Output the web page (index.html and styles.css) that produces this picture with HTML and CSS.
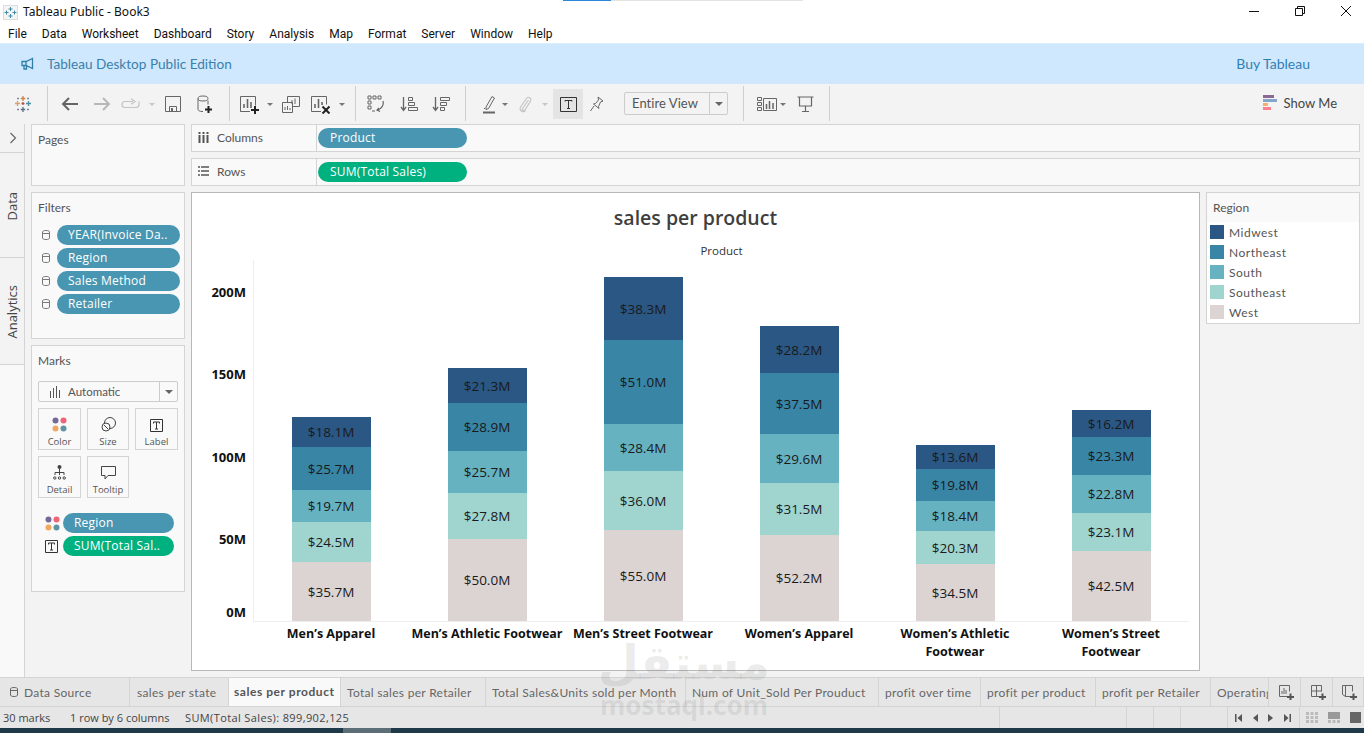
FILE: index.html
```html
<!DOCTYPE html>
<html lang="en">
<head>
<meta charset="utf-8">
<title>Tableau Public - Book3</title>
<link rel="stylesheet" href="styles.css">
</head>
<body>
<div class="app">
  <div class="sliver"><span class="sliver-blue"></span><span class="sliver-gray"></span></div>
  <header class="titlebar">
    <svg class="app-icon" width="15" height="15" viewBox="0 0 15 15"><rect x=".5" y=".5" width="14" height="14" fill="#f4f4f4" stroke="#ddd"/><g stroke="#3f8aa6" stroke-width="1" fill="none"><path d="M7.500 2v4M5.500 4h4M7.500 9v4M5.500 11h4M3.500 5.500v4M1.500 7.500h4M11.500 5.500v4M9.500 7.500h4"/></g></svg>
    <span class="title-text">Tableau Public - Book3</span>
    <div class="win-controls">
      <svg width="12" height="12" viewBox="0 0 12 12"><path d="M1 6.500h10" stroke="#111"/></svg>
      <svg width="12" height="12" viewBox="0 0 12 12"><path d="M1.500 3.500h7v7h-7zM3.500 3.500v-2h7v7h-2" fill="none" stroke="#111"/></svg>
      <svg width="12" height="12" viewBox="0 0 12 12"><path d="M1 1l10 10M11 1L1 11" stroke="#111"/></svg>
    </div>
  </header>
  <nav class="menubar">
    <span>File</span><span>Data</span><span>Worksheet</span><span>Dashboard</span><span>Story</span><span>Analysis</span><span>Map</span><span>Format</span><span>Server</span><span>Window</span><span>Help</span>
  </nav>
  <div class="banner">
    <svg width="14" height="14" viewBox="0 0 14 14" class="horn"><path d="M1 4.500h4L11.500 1.500v10L5 8.500H1zM5 4.500v4M3 8.500v3.500h2.500V8.800" fill="none" stroke="#2f7fa8" stroke-width="1.300"/></svg>
    <span class="banner-text">Tableau Desktop Public Edition</span>
    <span class="buy">Buy Tableau</span>
  </div>
  <div class="toolbar">
    <span class="tb w32"><svg width="18" height="18" viewBox="0 0 18 18" fill="none" stroke-width="1.300"><path d="M9 1v5M6.800 3.500h4.400" stroke="#c9834a"/><path d="M9 12v5M6.800 14.500h4.400" stroke="#5b6f8c"/><path d="M3.500 6v5M1 8.500h5" stroke="#d9a06c"/><path d="M14.500 6v5M12 8.500h5" stroke="#4e8fa3"/><path d="M9 7v3M7.500 8.500h3" stroke="#b4564a"/><path d="M4 2.500v2M3 3.500h2M14 2.500v2M13 3.500h2M4 13.500v2M3 14.500h2M14 13.500v2M13 14.500h2" stroke="#7b8a9a" stroke-width="1"/></svg></span>
    <i class="sep sep-a"></i>
    <span class="tb w32"><svg width="18" height="14" viewBox="0 0 18 14"><path d="M17 7H2M8 1L2 7l6 6" fill="none" stroke="#666" stroke-width="2"/></svg></span>
    <span class="tb w32"><svg width="18" height="14" viewBox="0 0 18 14"><path d="M1 7h15M10 1l6 6-6 6" fill="none" stroke="#b8b8b8" stroke-width="2"/></svg></span>
    <span class="tb w26"><svg width="20" height="12" viewBox="0 0 20 12"><path d="M12 3.500H4a3 3 0 0 0 0 6h11a3 3 0 0 0 3-3V3.500M10 .8l4 2.700-4 2.700" fill="none" stroke="#c4c4c4" stroke-width="1.200"/></svg></span>
    <span class="tb w16"><i class="caret off"></i></span>
    <span class="tb w26"><svg width="16" height="16" viewBox="0 0 16 16"><path d="M.5.500h15v15H.5z" fill="none" stroke="#666"/><path d="M4.500 10.500h7v5h-7z" fill="none" stroke="#666"/><path d="M6 12h2v3.500H6z" fill="#666"/></svg></span>
    <span class="tb w38"><svg width="16" height="19" viewBox="0 0 16 19"><path d="M11 5.500v4M1 3.500v11c0 1 2 2 4 2h1" fill="none" stroke="#666"/><ellipse cx="6" cy="3.500" rx="5" ry="2.500" fill="none" stroke="#666"/><path d="M8 14.500h7M11.500 11v7" stroke="#222" stroke-width="2"/></svg></span>
    <i class="sep sep-b"></i>
    <span class="tb w32"><svg width="20" height="19" viewBox="0 0 20 19"><path d="M1 16.500H.5V1.500h15v9" fill="none" stroke="#666"/><path d="M.5 16.500H10" stroke="#666"/><path d="M4 13V9M7.500 13V4M11 13V7" stroke="#666" stroke-width="1.600"/><path d="M11 15h8M15 11v8" stroke="#222" stroke-width="2"/></svg></span>
    <span class="tb w8"><i class="caret"></i></span>
    <span class="tb w34"><svg width="18" height="17" viewBox="0 0 18 17"><path d="M5.500 8.500V.5h12v10h-7" fill="none" stroke="#666"/><path d="M.5 6.500h10v10H.5z" fill="#f3f3f3" stroke="#666"/><path d="M10 8V4M13 8V2.500M3 14v-3M5.500 14v-4M8 14v-2" stroke="#666"/></svg></span>
    <span class="tb w26"><svg width="20" height="19" viewBox="0 0 20 19"><path d="M10 16.500H.5V1.500h15v8" fill="none" stroke="#666"/><path d="M4 13V9M7.500 13V4M11 10V7" stroke="#666" stroke-width="1.600"/><path d="M11.500 11.500l7 7M18.500 11.500l-7 7" stroke="#222" stroke-width="2"/></svg></span>
    <span class="tb w16"><i class="caret"></i></span>
    <i class="sep sep-c"></i>
    <span class="tb w40"><svg width="18" height="18" viewBox="0 0 18 18"><path d="M1 1h3v3H1zM6 1h3v3H6zM11 1h3v3h-3zM1 6h3v3H1zM1 11h3v3H1z" fill="none" stroke="#666"/><path d="M16 6c1 4-1 7-5 9M12 13l-2 2 3 1.500M5 16h3" fill="none" stroke="#666" stroke-width="1.200"/></svg></span>
    <span class="tb w26"><svg width="18" height="16" viewBox="0 0 18 16"><path d="M3.500 1v13M1 11l2.500 3.500L6 11" fill="none" stroke="#666" stroke-width="1.300"/><path d="M8.500 1.500h4v3h-4zM8.500 6.500h6v3h-6zM8.500 11.500h9v3h-9z" fill="none" stroke="#666"/></svg></span>
    <span class="tb w38"><svg width="18" height="16" viewBox="0 0 18 16"><path d="M3.500 1v13M1 11l2.500 3.500L6 11" fill="none" stroke="#666" stroke-width="1.300"/><path d="M8.500 1.500h9v3h-9zM8.500 6.500h6v3h-6zM8.500 11.500h4v3h-4z" fill="none" stroke="#666"/></svg></span>
    <i class="sep sep-d"></i>
    <span class="tb w22"><svg width="13" height="19" viewBox="0 0 13 19"><path d="M3 12L9 1.500l2.500 1.500-6 10.500-2.500 1z" fill="none" stroke="#666"/><path d="M1 13l1 1" stroke="#666"/><path d="M0 17.500h12" stroke="#666" stroke-width="2"/></svg></span>
    <span class="tb w10"><i class="caret"></i></span>
    <span class="tb w30"><svg width="13" height="17" viewBox="0 0 13 17"><path d="M9.500 4l-6 8.500c-1 1.500 1 3 2.500 1.500l5.500-9c1.500-3-2.500-5-4-2.500L1.500 11c-1.500 3 2 6.500 5 3.500" fill="none" stroke="#c2c2c2" stroke-width="1.100"/></svg></span>
    <span class="tb w10"><i class="caret off"></i></span>
    <span class="tb w30 tb-on"><svg width="17" height="15" viewBox="0 0 17 15"><path d="M.5.500h16v14H.5z" fill="none" stroke="#333"/><path d="M5 4.500V3.500h7v1M8.500 3.500v8M7 11.500h3" fill="none" stroke="#333"/></svg></span>
    <span class="tb w28"><svg width="14" height="16" viewBox="0 0 14 16"><path d="M8 1l5 4-2.500 1-2 4.500L9 12.500 3.500 8l2-.5 3-3.500zM4 10l-3.500 5" fill="none" stroke="#666" stroke-linejoin="round"/></svg></span>
    <div class="fit-select"><span class="fit-label">Entire View</span><span class="fit-arrow"><i class="caret dark"></i></span></div>
    <i class="sep sep-e"></i>
    <span class="tb w22"><svg width="20" height="14" viewBox="0 0 20 14"><path d="M.5.500h4v3h-4zM.5 5.500h4v3h-4zM.5 10.500h4v3h-4zM6.500 1.500h13v12h-13z" fill="none" stroke="#666"/><path d="M9.500 12V7M12.500 12V4M16 12V6" stroke="#666" stroke-width="1.500"/></svg></span>
    <span class="tb w10"><i class="caret"></i></span>
    <span class="tb w34"><svg width="17" height="16" viewBox="0 0 17 16"><path d="M.5 1h16M2.500 1v9h12V1M8.500 10v5M5 15.500h7" fill="none" stroke="#666" stroke-width="1.200"/></svg></span>
    <i class="sep sep-f"></i>
    <div class="showme">
      <svg width="15" height="16" viewBox="0 0 15 16"><path d="M0 0h11v3H0z" fill="#8a6a94"/><path d="M0 4h14v3H0z" fill="#84a6c8"/><path d="M0 8h5v3H0z" fill="#f3b06c"/><path d="M0 12h8v3H0z" fill="#fb7f8e"/></svg>
      <span>Show Me</span>
    </div>
  </div>

  <div class="workspace">
    <aside class="rail">
      <div class="rail-top"><svg width="8" height="12" viewBox="0 0 8 12"><path d="M1.500 1l5 5-5 5" fill="none" stroke="#666" stroke-width="1.200"/></svg></div>
      <div class="rail-item rail-data"><span>Data</span></div>
      <div class="rail-item rail-analytics"><span>Analytics</span></div>
    </aside>
    <section class="side">
      <div class="card pages"><div class="card-title">Pages</div></div>
      <div class="card filters">
        <div class="card-title">Filters</div>
        <div class="filter-list">
          <div class="filter-row"><svg class="db" width="8" height="10" viewBox="0 0 8 10"><path d="M.5 2v6c0 1 1.500 1.500 3.500 1.500S7.500 9 7.500 8V2C7.500 1 6 .5 4 .5S.5 1 .5 2zM.5 3.500h7" fill="none" stroke="#777"/></svg><span class="pill blue">YEAR(Invoice Da..</span></div>
          <div class="filter-row"><svg class="db" width="8" height="10" viewBox="0 0 8 10"><path d="M.5 2v6c0 1 1.500 1.500 3.500 1.500S7.500 9 7.500 8V2C7.500 1 6 .5 4 .5S.5 1 .5 2zM.5 3.500h7" fill="none" stroke="#777"/></svg><span class="pill blue">Region</span></div>
          <div class="filter-row"><svg class="db" width="8" height="10" viewBox="0 0 8 10"><path d="M.5 2v6c0 1 1.500 1.500 3.500 1.500S7.500 9 7.500 8V2C7.500 1 6 .5 4 .5S.5 1 .5 2zM.5 3.500h7" fill="none" stroke="#777"/></svg><span class="pill blue">Sales Method</span></div>
          <div class="filter-row"><svg class="db" width="8" height="10" viewBox="0 0 8 10"><path d="M.5 2v6c0 1 1.500 1.500 3.500 1.500S7.500 9 7.500 8V2C7.500 1 6 .5 4 .5S.5 1 .5 2zM.5 3.500h7" fill="none" stroke="#777"/></svg><span class="pill blue">Retailer</span></div>
        </div>
      </div>
      <div class="card marks">
        <div class="card-title">Marks</div>
        <div class="mark-type">
          <svg width="10" height="12" viewBox="0 0 10 12"><path d="M.5 5v7M3.500 2v10M6.500 0v12M9.500 4v8" stroke="#555"/></svg>
          <span class="mark-type-label">Automatic</span>
          <span class="mark-type-arrow"><i class="caret dark"></i></span>
        </div>
        <div class="mark-grid">
          <div class="mark-btn"><svg width="15" height="15" viewBox="0 0 15 15"><circle cx="3.500" cy="3.500" r="3" fill="#75699a"/><circle cx="11.500" cy="3.500" r="3" fill="#ef6479"/><circle cx="3.500" cy="11.500" r="3" fill="#f0a860"/><circle cx="11.500" cy="11.500" r="3" fill="#5f95a3"/></svg><span>Color</span></div>
          <div class="mark-btn"><svg width="15" height="15" viewBox="0 0 15 15"><circle cx="9" cy="6" r="5.500" fill="none" stroke="#444"/><circle cx="5" cy="10" r="4" fill="#fafafa" stroke="#444"/><path d="M3 8l4 4" stroke="#444"/></svg><span>Size</span></div>
          <div class="mark-btn"><svg width="13" height="13" viewBox="0 0 13 13"><path d="M.5.500h12v12H.5z" fill="none" stroke="#333"/><path d="M3.500 4.500V3h6v1.500M6.500 3v7M5 10h3" fill="none" stroke="#333"/></svg><span>Label</span></div>
          <div class="mark-btn"><svg width="13" height="15" viewBox="0 0 13 15"><circle cx="6.500" cy="2" r="2" fill="#444"/><path d="M6.500 4v6M2 10V7.500h9V10" fill="none" stroke="#444"/><circle cx="1.800" cy="13" r="1.200" fill="none" stroke="#444"/><circle cx="6.500" cy="13" r="1.200" fill="none" stroke="#444"/><circle cx="11.200" cy="13" r="1.200" fill="none" stroke="#444"/></svg><span>Detail</span></div>
          <div class="mark-btn"><svg width="15" height="14" viewBox="0 0 15 14"><path d="M.5.500h14v9H7l-3 3.500v-3.500H.5z" fill="none" stroke="#444"/></svg><span>Tooltip</span></div>
        </div>
        <div class="mark-fields">
          <div class="mark-field"><svg width="15" height="15" viewBox="0 0 15 15"><circle cx="3.500" cy="3.500" r="3" fill="#75699a"/><circle cx="11.500" cy="3.500" r="3" fill="#ef6479"/><circle cx="3.500" cy="11.500" r="3" fill="#f0a860"/><circle cx="11.500" cy="11.500" r="3" fill="#5f95a3"/></svg><span class="pill blue">Region</span></div>
          <div class="mark-field"><svg width="13" height="13" viewBox="0 0 13 13"><path d="M.5.500h12v12H.5z" fill="none" stroke="#333"/><path d="M3.500 4.500V3h6v1.500M6.500 3v7M5 10h3" fill="none" stroke="#333"/></svg><span class="pill green">SUM(Total Sal..</span></div>
        </div>
      </div>
    </section>
    <main class="center">
      <div class="shelf">
        <div class="shelf-label"><svg width="11" height="11" viewBox="0 0 11 11"><path d="M1.500 0v2M5.500 0v2M9.500 0v2" stroke="#555" stroke-width="2"/><path d="M1.500 3v8M5.500 3v8M9.500 3v8" stroke="#555" stroke-width="2"/></svg><span>Columns</span></div>
        <span class="pill blue shelf-pill">Product</span>
      </div>
      <div class="shelf">
        <div class="shelf-label"><svg width="11" height="10" viewBox="0 0 11 10"><path d="M0 1h2M3 1h8M0 5h2M3 5h8M0 9h2M3 9h8" stroke="#555" stroke-width="1.500"/></svg><span>Rows</span></div>
        <span class="pill green shelf-pill">SUM(Total Sales)</span>
      </div>
      <div class="stage">
        <div class="view">
          <h1 class="chart-title">sales per product</h1>
          <div class="field-label">Product</div>
          <div class="chart">
            <div class="axis">
              <span>200M</span><span>150M</span><span>100M</span><span>50M</span><span class="axis-zero">0M</span>
            </div>
            <div class="plot">
              <div class="col">
                <div class="seg midwest" style="height:30px">$18.1M</div><div class="seg northeast" style="height:43px">$25.7M</div><div class="seg south" style="height:32px">$19.7M</div><div class="seg southeast" style="height:40px">$24.5M</div><div class="seg west" style="height:59px">$35.7M</div>
              </div>
              <div class="col">
                <div class="seg midwest" style="height:35px">$21.3M</div><div class="seg northeast" style="height:48px">$28.9M</div><div class="seg south" style="height:42px">$25.7M</div><div class="seg southeast" style="height:46px">$27.8M</div><div class="seg west" style="height:82px">$50.0M</div>
              </div>
              <div class="col">
                <div class="seg midwest" style="height:63px">$38.3M</div><div class="seg northeast" style="height:84px">$51.0M</div><div class="seg south" style="height:47px">$28.4M</div><div class="seg southeast" style="height:59px">$36.0M</div><div class="seg west" style="height:91px">$55.0M</div>
              </div>
              <div class="col">
                <div class="seg midwest" style="height:47px">$28.2M</div><div class="seg northeast" style="height:61px">$37.5M</div><div class="seg south" style="height:49px">$29.6M</div><div class="seg southeast" style="height:52px">$31.5M</div><div class="seg west" style="height:86px">$52.2M</div>
              </div>
              <div class="col">
                <div class="seg midwest" style="height:24px">$13.6M</div><div class="seg northeast" style="height:32px">$19.8M</div><div class="seg south" style="height:30px">$18.4M</div><div class="seg southeast" style="height:33px">$20.3M</div><div class="seg west" style="height:57px">$34.5M</div>
              </div>
              <div class="col">
                <div class="seg midwest" style="height:27px">$16.2M</div><div class="seg northeast" style="height:38px">$23.3M</div><div class="seg south" style="height:38px">$22.8M</div><div class="seg southeast" style="height:38px">$23.1M</div><div class="seg west" style="height:70px">$42.5M</div>
              </div>
            </div>
          </div>
          <div class="xlabels">
            <span>Men’s Apparel</span><span>Men’s Athletic Footwear</span><span>Men’s Street Footwear</span><span>Women’s Apparel</span><span>Women’s Athletic Footwear</span><span>Women’s Street Footwear</span>
          </div>
        </div>
        <aside class="legend">
          <div class="legend-title">Region</div>
          <div class="legend-row"><i class="swatch midwest"></i>Midwest</div>
          <div class="legend-row"><i class="swatch northeast"></i>Northeast</div>
          <div class="legend-row"><i class="swatch south"></i>South</div>
          <div class="legend-row"><i class="swatch southeast"></i>Southeast</div>
          <div class="legend-row"><i class="swatch west"></i>West</div>
        </aside>
      </div>
    </main>
  </div>

  <div class="tabs">
    <div class="tab"><svg width="8" height="10" viewBox="0 0 8 10"><path d="M.5 2v6c0 1 1.500 1.500 3.500 1.500S7.500 9 7.500 8V2C7.500 1 6 .5 4 .5S.5 1 .5 2zM.5 3.500h7" fill="none" stroke="#666"/></svg>Data Source</div>
    <div class="tab">sales per state</div>
    <div class="tab active">sales per product</div>
    <div class="tab">Total sales per Retailer</div>
    <div class="tab">Total Sales&amp;Units sold per Month</div>
    <div class="tab">Num of Unit_Sold Per Prouduct</div>
    <div class="tab">profit over time</div>
    <div class="tab">profit per product</div>
    <div class="tab">profit per Retailer</div>
    <div class="tab clip">Operating Profit</div>
    <div class="tab icon"><svg width="16" height="15" viewBox="0 0 16 15"><path d="M9 11.500H.5V.5h10v6" fill="none" stroke="#666"/><path d="M3 9V6M5 9V3M7 9V5" stroke="#666"/><path d="M8 12h7M11.500 8.500v6.500" stroke="#555" stroke-width="2"/></svg></div>
    <div class="tab icon"><svg width="16" height="15" viewBox="0 0 16 15"><path d="M8 11.500H.5V.5h10v6M.5 6h10M5.500.5v11" fill="none" stroke="#666"/><path d="M8 12h7M11.500 8.500v6.500" stroke="#555" stroke-width="2"/></svg></div>
    <div class="tab icon"><svg width="16" height="15" viewBox="0 0 16 15"><path d="M9 11.500H3.500l-3-2V.5h10v6M3.500.5v11" fill="none" stroke="#666"/><path d="M8 12h7M11.500 8.500v6.500" stroke="#555" stroke-width="2"/></svg></div>
  </div>
  <footer class="status">
    <span class="st st1">30 marks</span><span class="st st2">1 row by 6 columns</span><span class="st st3">SUM(Total Sales): 899,902,125</span>
    <i class="st-div"></i><i class="st-gap a"></i><i class="st-div"></i><i class="st-gap b"></i><i class="st-div"></i><i class="st-gap b"></i><i class="st-div"></i><i class="st-gap c"></i><i class="st-div"></i>
    <div class="pager">
      <svg width="7" height="8" viewBox="0 0 7 8"><path d="M0 0h1.500v8H0zM7 0v8L2.500 4z" fill="#555"/></svg>
      <svg width="5" height="8" viewBox="0 0 5 8"><path d="M5 0v8L0 4z" fill="#555"/></svg>
      <svg width="5" height="8" viewBox="0 0 5 8"><path d="M0 0v8l5-4z" fill="#555"/></svg>
      <svg width="7" height="8" viewBox="0 0 7 8"><path d="M0 0v8l4.500-4zM5.500 0H7v8H5.500z" fill="#555"/></svg>
    </div>
    <i class="st-div"></i>
    <div class="sizer">
      <svg width="12" height="11" viewBox="0 0 12 11"><path d="M0 0h3v3H0zM4.500 0h3v3h-3zM9 0h3v3H9zM0 4h3v3H0zM4.500 4h3v3h-3zM9 4h3v3H9zM0 8h3v3H0zM4.500 8h3v3h-3zM9 8h3v3H9z" fill="#bbb"/></svg>
      <svg width="12" height="11" viewBox="0 0 12 11"><path d="M0 0h12v7H0z" fill="#999"/><path d="M0 8h3v3H0zM4.500 8h3v3h-3zM9 8h3v3H9z" fill="#bbb"/></svg>
      <svg width="11" height="11" viewBox="0 0 11 11"><path d="M0 0h11v11H0z" fill="#666"/></svg>
    </div>
  </footer>
  <div class="taskbar"><span class="task-light"></span></div>
  <div class="watermark" aria-hidden="true">
    <div class="wm-ar" lang="ar" dir="rtl">مستقل</div>
    <div class="wm-en">mostaql.com</div>
  </div>
</div>
</body>
</html>
```
FILE: styles.css
```css
* { box-sizing: border-box; }
html, body { margin: 0; padding: 0; }
body { width: 1364px; height: 733px; overflow: hidden; font-family: "Open Sans", "Noto Sans", sans-serif; background: #fff; }
.app { position: relative; width: 1364px; height: 733px; display: flex; flex-direction: column; overflow: hidden; }

.sliver { position: absolute; top: 0; left: 563px; display: flex; height: 1px; }
.sliver-blue { width: 48px; background: #2a86d8; }
.sliver-gray { width: 192px; background: #e3e3e3; }

.titlebar { height: 22px; display: flex; align-items: center; padding: 0 12px 0 3px; background: #fff; flex: none; }
.app-icon { margin-right: 5px; margin-top: 2px; }
.title-text { font-size: 12px; color: #111; font-family: "Noto Sans", sans-serif; }
.win-controls { margin-left: auto; display: flex; gap: 34px; align-items: center; }

.menubar { height: 21px; display: flex; align-items: center; gap: 15px; padding: 2px 0 0 8px; background: #fff; font-size: 12px; color: #111; flex: none; font-family: Roboto, sans-serif; }

.banner { height: 41px; background: #cfe8fd; display: flex; align-items: center; padding: 0 54px 0 21px; flex: none; color: #3a80ab; font-size: 13px; font-family: Lato, sans-serif; border-top: 1px solid #dbeefd; }
.horn { margin-right: 12px; }
.banner-text { font-size: 13.6px; }
.buy { margin-left: auto; font-size: 14px; color: #2f7fb5; margin-bottom: 2px; }

.toolbar { height: 40px; background: #f3f3f3; display: flex; align-items: center; padding-left: 7px; flex: none; }
.tb { display: flex; align-items: center; justify-content: center; height: 30px; flex: none; }
.w8 { width: 8px; } .w10 { width: 10px; } .w16 { width: 16px; } .w22 { width: 22px; } .w26 { width: 26px; } .w28 { width: 28px; } .w30 { width: 30px; } .w32 { width: 32px; } .w34 { width: 34px; } .w38 { width: 38px; } .w40 { width: 40px; }
.tb-on { background: #e4e4e4; margin-left: 3px; }
.sep { display: block; width: 1px; height: 35px; background: #cfcfcf; flex: none; }
.sep-a { margin: 0 6px 2px 8px; }
.sep-b { margin: 0 4px 2px 5px; }
.sep-c { margin: 0 0 2px 5px; }
.sep-d { margin: 0 12px 2px 5px; }
.sep-e { margin: 0 12px 2px 15px; }
.sep-f { margin: 0 0 2px 7px; }
.caret { display: block; width: 0; height: 0; border-left: 3px solid transparent; border-right: 3px solid transparent; border-top: 3px solid #777; }
.caret.off { border-top-color: #c6c6c6; }
.caret.dark { border-left-width: 4px; border-right-width: 4px; border-top: 4px solid #666; }
.fit-select { margin-left: 13px; margin-bottom: 1px; width: 104px; height: 23px; display: flex; align-items: center; border: 1px solid #ccc; border-radius: 2px; background: #f3f3f3; font-size: 13px; color: #555; font-family: Lato, sans-serif; flex: none; }
.fit-label { flex: 1; padding: 0 0 1px 7px; letter-spacing: .05px; }
.fit-arrow { width: 18px; height: 100%; border-left: 1px solid #ccc; display: flex; align-items: center; justify-content: center; }
.showme { margin-left: auto; margin-bottom: 2px; padding-right: 27px; display: flex; align-items: center; gap: 6px; font-size: 13px; color: #444; font-family: Lato, sans-serif; }

.workspace { height: 553px; display: flex; background: #f3f3f3; flex: none; }
.rail { width: 25px; border-right: 1px solid #d4d4d4; flex: none; display: flex; flex-direction: column; background: #f9f9f9; }
.rail-top { height: 29px; border-bottom: 1px solid #d4d4d4; display: flex; align-items: center; padding-left: 9px; background: #f3f3f3; }
.rail-item { border-bottom: 1px solid #d4d4d4; display: flex; align-items: flex-start; justify-content: center; background: #f3f3f3; font-size: 13px; color: #444; }
.rail-item span { writing-mode: vertical-rl; transform: rotate(180deg); }
.rail-data { height: 105px; padding-top: 39px; }
.rail-analytics { height: 107px; padding-top: 27px; }

.side { width: 154px; margin-left: 6px; display: flex; flex-direction: column; gap: 6px; flex: none; }
.card { background: #f9f9f9; border: 1px solid #d4d4d4; padding: 0 6px; }
.card-title { font-size: 12px; color: #555; height: 29px; line-height: 29px; font-family: Lato, "Open Sans", sans-serif; }
.pages { height: 62px; }
.pages .card-title { height: 30px; line-height: 30px; }
.filters { height: 147px; }
.filters .card-title { height: 32px; line-height: 30px; }
.marks { height: 247px; }
.marks .card-title { height: 35px; line-height: 30px; }

.pill { display: flex; align-items: center; height: 20px; border-radius: 10px; color: #fff; font-size: 12px; padding: 0 0 2px 11px; white-space: nowrap; overflow: hidden; font-family: "Open Sans", sans-serif; letter-spacing: .2px; }
.blue { background: #4996b2; }
.green { background: #00b180; }
.filter-list { display: flex; flex-direction: column; gap: 3px; }
.filter-row { display: flex; align-items: center; }
.db { margin: 0 7px 0 4px; flex: none; }
.filter-row .pill { flex: 1; margin-right: -2px; }

.mark-type { height: 21px; border: 1px solid #ccc; border-radius: 2px; display: flex; align-items: center; padding-left: 11px; font-size: 11.500px; color: #555; background: #f9f9f9; font-family: Lato, sans-serif; }
.mark-type-label { flex: 1; margin-left: 8px; }
.mark-type-arrow { width: 18px; height: 100%; border-left: 1px solid #ccc; display: flex; align-items: center; justify-content: center; }
.mark-grid { display: grid; grid-template-columns: 43px 42px 43px; gap: 6px 6px; margin-top: 6px; }
.mark-btn { height: 42px; border: 1px solid #d4d4d4; display: flex; flex-direction: column; align-items: center; justify-content: flex-end; padding-bottom: 1px; font-size: 9.500px; color: #555; gap: 3px; }
.mark-fields { display: flex; flex-direction: column; gap: 3px; margin-top: 15px; }
.mark-field { display: flex; align-items: center; justify-content: space-between; padding: 0 4px 0 7px; }
.mark-field .pill { width: 111px; flex: none; }

.center { width: 1169px; margin-left: 6px; display: flex; flex-direction: column; flex: none; }
.shelf { height: 28px; background: #f9f9f9; border: 1px solid #d4d4d4; display: flex; align-items: center; margin-bottom: 6px; }
.shelf-label { width: 125px; height: 100%; border-right: 1px solid #d4d4d4; display: flex; align-items: center; gap: 8px; padding: 0 0 2px 6px; font-size: 12px; color: #555; font-family: Lato, sans-serif; flex: none; }
.shelf-pill { width: 149px; margin-left: 1px; padding-left: 12px; }

.stage { display: flex; gap: 6px; align-items: flex-start; }
.view { width: 1009px; height: 479px; background: #fff; border: 1px solid #b8b8b8; display: flex; flex-direction: column; }
.chart-title { margin: 0; height: 47px; line-height: 49px; text-align: center; font-size: 19.500px; font-weight: 600; color: #3f3f3f; flex: none; font-family: "Open Sans", sans-serif; }
.field-label { height: 20px; line-height: 21px; font-size: 11.500px; color: #333; padding-left: 61px; padding-right: 9px; text-align: center; flex: none; }
.chart { height: 361px; display: flex; flex: none; }
.axis { width: 61px; padding-right: 7px; display: flex; flex-direction: column; align-items: stretch; font-size: 13px; font-weight: 700; color: #111; text-align: right; flex: none; }
.axis span { display: block; height: 82.250px; line-height: 82.250px; }
.axis span:first-child { margin-top: -9px; }
.axis .axis-zero { height: 41px; line-height: 20px; padding-top: 22px; }
.plot { width: 936px; box-shadow: inset 1px 0 #eeeeee, 0 1px #eeeeee; display: grid; grid-template-columns: repeat(6, 156px); flex: none; }
.col { display: flex; flex-direction: column; justify-content: flex-end; align-items: center; }
.seg { width: 79px; display: flex; align-items: center; justify-content: center; font-size: 13.500px; color: #1a1a1a; flex: none; }
.midwest { background: #2a5783; }
.northeast { background: #3885a6; }
.south { background: #66b2c0; }
.southeast { background: #a0d5cf; }
.west { background: #dcd4d2; }
.xlabels { display: grid; grid-template-columns: repeat(6, 156px); padding: 4px 0 0 61px; flex: 1; font-size: 12.500px; font-weight: 700; color: #111; line-height: 18px; text-align: center; }

.legend { width: 154px; height: 132px; background: #fff; border: 1px solid #d4d4d4; font-size: 12px; color: #555; font-family: Lato, sans-serif; flex: none; }
.legend-title { height: 29px; line-height: 29px; padding-left: 6px; background: #f9f9f9; font-size: 12px; }
.legend-row { height: 20px; display: flex; align-items: center; padding-left: 3px; gap: 5px; letter-spacing: .5px; }
.swatch { display: block; width: 14px; height: 14px; flex: none; }

.tabs { height: 30px; display: grid; grid-template-columns: 130px 99px 112px 145px 200px 193px 102px 115px 115px 58px 32px 32px 31px; background: #e6e6e6; border-top: 1px solid #d4d4d4; border-bottom: 1px solid #d4d4d4; flex: none; font-size: 12px; color: #666; font-family: Lato, "Open Sans", sans-serif; letter-spacing: .3px; }
.tab { border-right: 1px solid #d4d4d4; padding-left: 6px; display: flex; align-items: center; white-space: nowrap; overflow: hidden; gap: 6px; }
.tab:first-child { padding-left: 10px; }
.tab:nth-child(2) { padding-left: 7px; }
.tab.active { background: #f9f9f9; font-weight: 700; color: #555; padding: 0 0 2px 5px; letter-spacing: .55px; }
.tab.icon { justify-content: center; padding: 0 0 0 4px; }

.status { height: 21px; display: flex; align-items: center; background: #e6e6e6; flex: none; font-size: 11px; color: #444; font-family: "Open Sans", sans-serif; }
.st { flex: none; white-space: nowrap; }
.st1 { width: 70px; padding-left: 3px; }
.st2 { width: 115px; }
.st3 { width: 814px; letter-spacing: .38px; }
.st-div { display: block; width: 1px; height: 100%; background: #d4d4d4; flex: none; }
.st-gap.a { width: 126px; }
.st-gap.b { width: 26px; }
.st-gap.c { width: 46px; }
.pager { width: 71px; display: flex; align-items: center; gap: 10.500px; padding-left: 7px; flex: none; }
.sizer { display: flex; align-items: center; gap: 10px; padding-left: 6px; }

.taskbar { height: 5px; background: #1f3948; flex: none; }
.task-light { display: block; width: 48px; height: 5px; margin-left: 343px; background: #5c6e78; }

.watermark { position: absolute; left: 596px; top: 636px; width: 176px; text-align: center; pointer-events: none; color: rgba(60, 60, 60, .1); }
.wm-ar { font-family: "DejaVu Sans", sans-serif; font-weight: 700; font-size: 47px; line-height: 54px; }
.wm-en { font-family: "Noto Sans", sans-serif; font-weight: 700; font-size: 26px; line-height: 30px; }
```
